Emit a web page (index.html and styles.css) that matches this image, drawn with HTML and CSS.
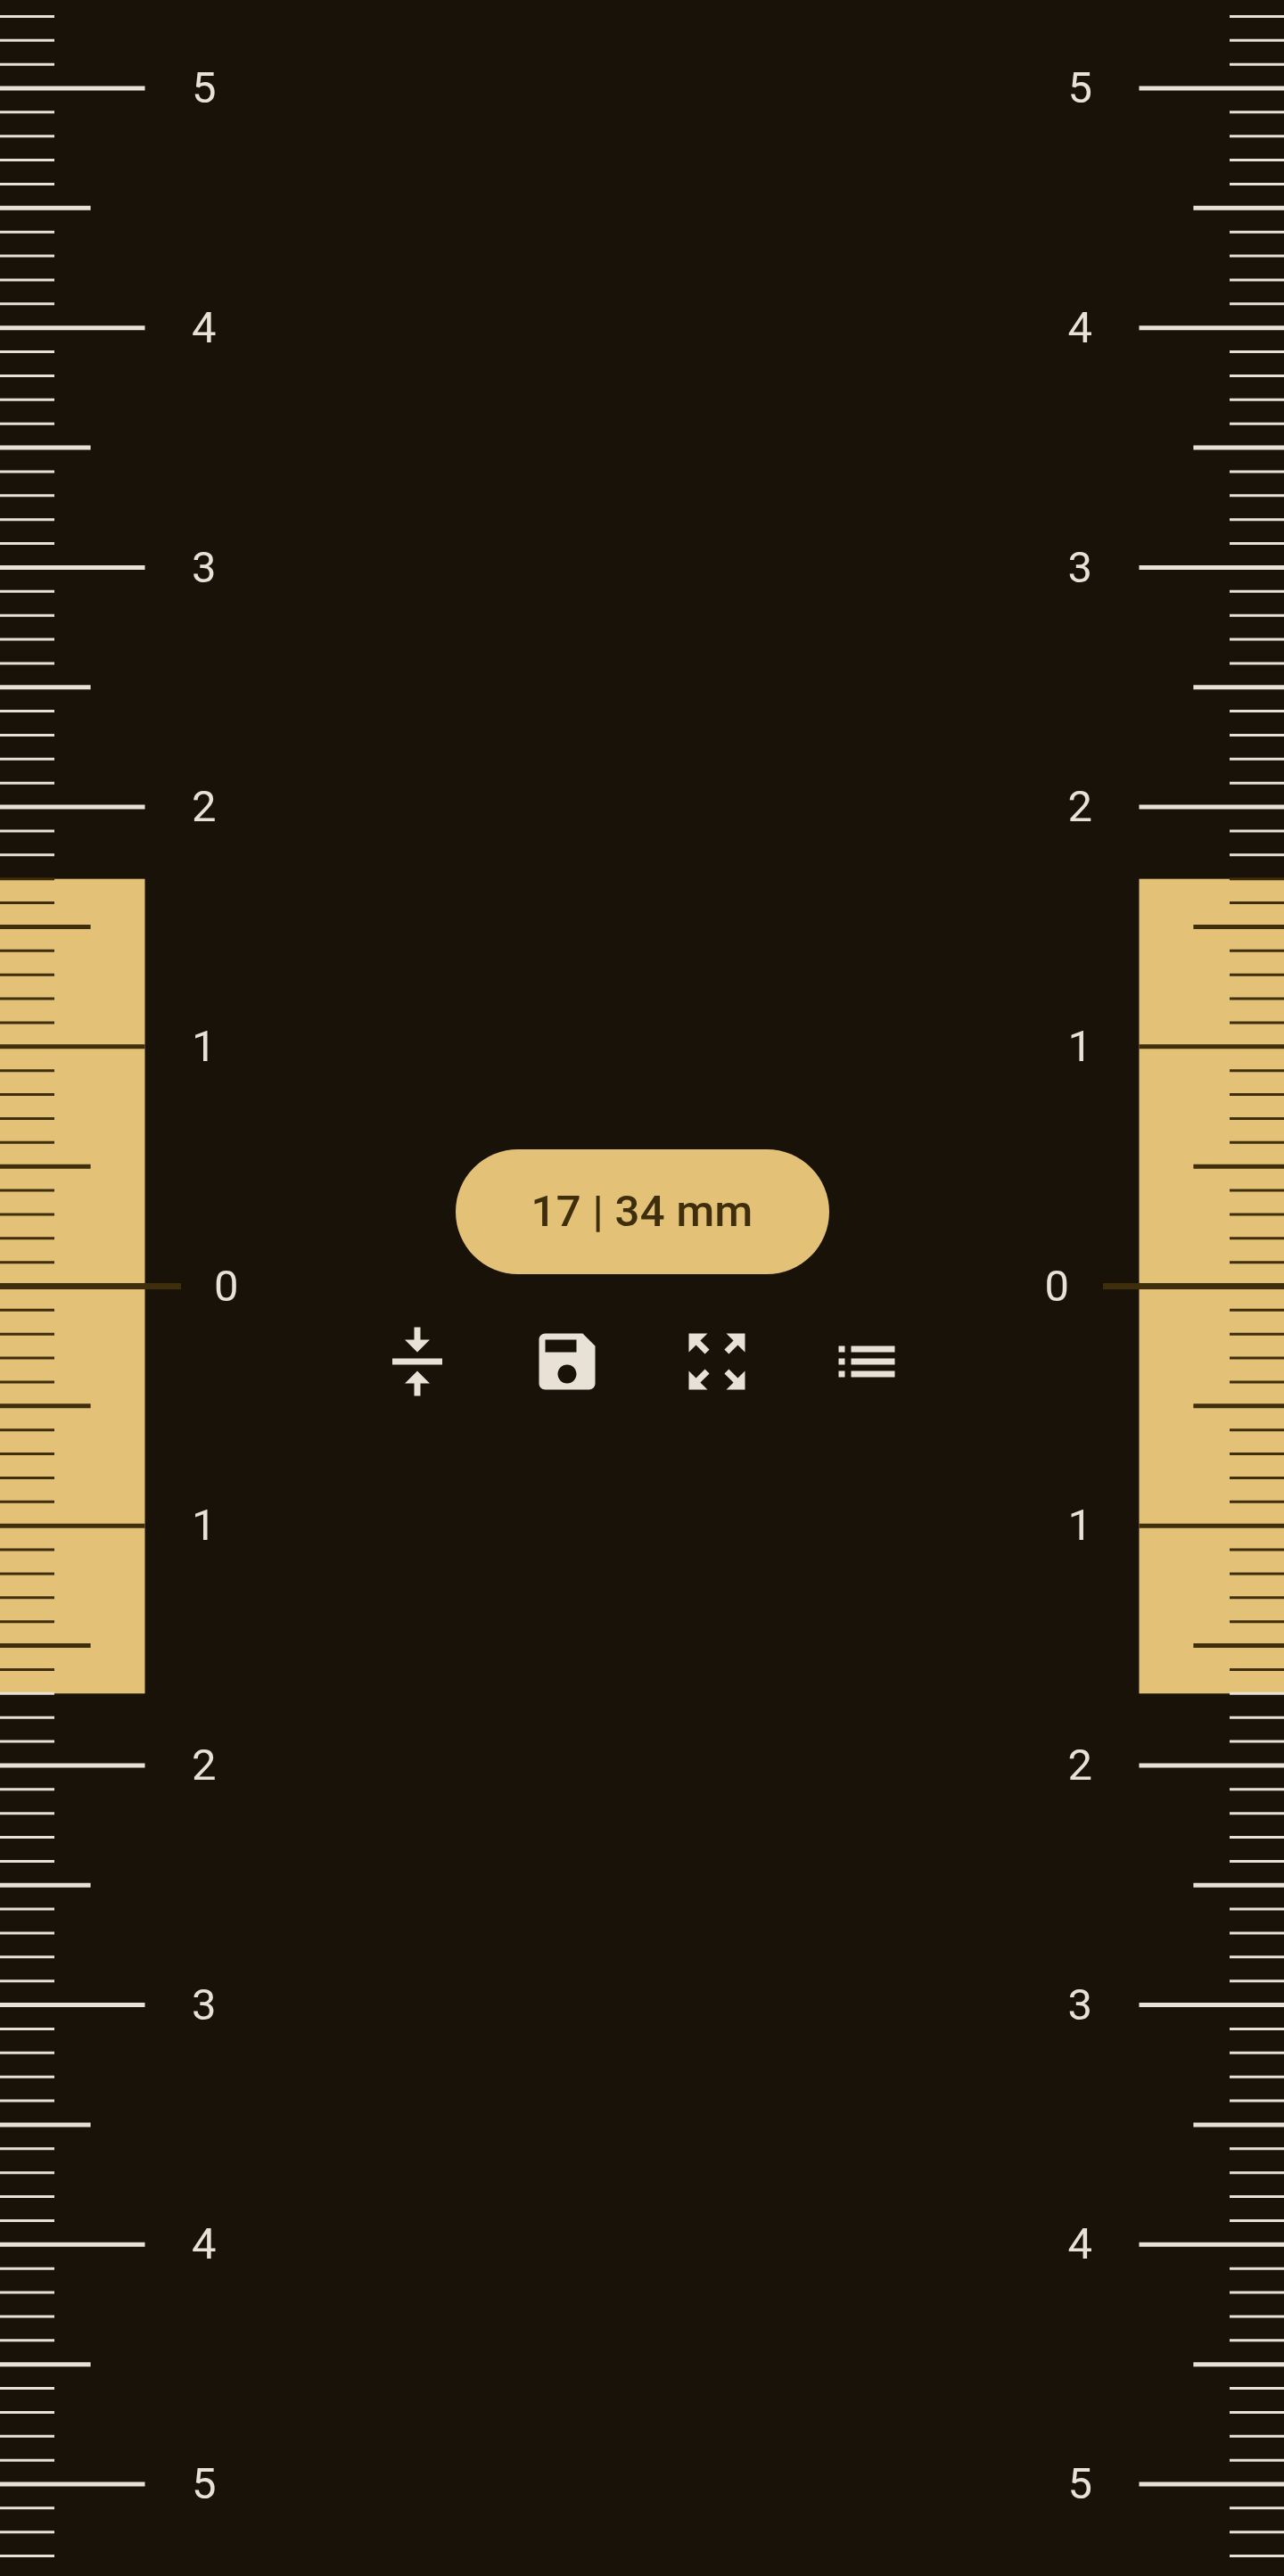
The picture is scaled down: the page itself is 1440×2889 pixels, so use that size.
FILE: index.html
```html
<!DOCTYPE html>
<html lang="en">
<head>
<meta charset="utf-8">
<title>Ruler</title>
<link rel="stylesheet" href="styles.css">
</head>
<body>
<!-- Scale marks: 26.87px per millimetre, zero at y = 1442.5 -->
<main class="screen">
  <svg class="ruler" viewBox="0 0 300 2889" role="img" aria-label="Left ruler">
    <defs>
      <g id="marks" transform="translate(0 1442.5)">
        <rect class="range" x="0" y="-456.8" width="162.5" height="913.6"/>
        <g class="light">
          <path class="minor" d="M30.5 -1425.61V-482M30.5 455.29V1430"/>
          <path class="half" d="M50.8 -1211.65V-600M50.8 669.25V1300"/>
          <path class="major" d="M81.25 -1346V-500M81.25 534.9V1400"/>
        </g>
        <g class="dark">
          <path class="minor" d="M30.5 -458.29V440"/>
          <path class="half" d="M50.8 -405.55V420"/>
          <path class="major" d="M81.25 -271.2V290"/>
          <path class="zero" d="M0 0H203"/>
        </g>
      </g>
    </defs>
    <use href="#marks"/>
    <g class="labels">
      <text x="215" y="115">5</text>
      <text x="215" y="384">4</text>
      <text x="215" y="653">3</text>
      <text x="215" y="921">2</text>
      <text x="215" y="1190">1</text>
      <text x="240" y="1459">0</text>
      <text x="215" y="1727">1</text>
      <text x="215" y="1996">2</text>
      <text x="215" y="2265">3</text>
      <text x="215" y="2533">4</text>
      <text x="215" y="2802">5</text>
    </g>
  </svg>

  <section class="controls">
    <button class="reading">17 | 34 mm</button>
    <nav class="actions">
      <svg class="icon" viewBox="0 0 24 24"><path d="M8 19h3v4h2v-4h3l-4-4-4 4zm8-14h-3V1h-2v4H8l4 4 4-4zM4 11v2h16v-2H4z"/></svg>
      <svg class="icon" viewBox="0 0 24 24"><path d="M17 3H5c-1.11 0-2 .9-2 2v14c0 1.1.89 2 2 2h14c1.1 0 2-.9 2-2V7l-4-4zm-5 16c-1.66 0-3-1.34-3-3s1.34-3 3-3 3 1.34 3 3-1.34 3-3 3zm3-10H5V5h10v4z"/></svg>
      <svg class="icon" viewBox="0 0 24 24"><path d="M15 3l2.3 2.3-2.89 2.87 1.42 1.42L18.7 6.7 21 9V3zM3 9l2.3-2.3 2.87 2.89 1.42-1.42L6.7 5.3 9 3H3zm6 12l-2.3-2.3 2.89-2.87-1.42-1.42L5.3 17.3 3 15v6zm12-6l-2.3 2.3-2.87-2.89-1.42 1.42 2.89 2.87L15 21h6z"/></svg>
      <svg class="icon" viewBox="0 0 24 24"><path d="M3 13h2v-2H3v2zm0 4h2v-2H3v2zm0-8h2V7H3v2zm4 4h14v-2H7v2zm0 4h14v-2H7v2zM7 7v2h14V7H7z"/></svg>
    </nav>
  </section>

  <svg class="ruler" viewBox="0 0 300 2889" role="img" aria-label="Right ruler">
    <use href="#marks" transform="translate(300 0) scale(-1 1)"/>
    <g class="labels">
      <text x="57.5" y="115">5</text>
      <text x="57.5" y="384">4</text>
      <text x="57.5" y="653">3</text>
      <text x="57.5" y="921">2</text>
      <text x="57.5" y="1190">1</text>
      <text x="31.5" y="1459">0</text>
      <text x="57.5" y="1727">1</text>
      <text x="57.5" y="1996">2</text>
      <text x="57.5" y="2265">3</text>
      <text x="57.5" y="2533">4</text>
      <text x="57.5" y="2802">5</text>
    </g>
  </svg>
</main>
</body>
</html>
```
FILE: styles.css
```css
:root {
  --surface: #191209;
  --on-surface: #eae1d6;
  --primary: #e3c278;
  --on-primary: #3e2e0b;
}

body {
  margin: 0;
  background: var(--surface);
  font-family: Roboto, "Liberation Sans", sans-serif;
}

.screen {
  display: grid;
  grid-template-columns: 300px 1fr 300px;
  height: 2889px;
  overflow: hidden;
}

.ruler {
  display: block;
  width: 300px;
  height: 2889px;
}

.range { fill: var(--primary); }
.light { stroke: var(--on-surface); }
.dark { stroke: var(--on-primary); }

.minor {
  stroke-width: 61px;
  stroke-dasharray: 3 23.87;
}

.half {
  stroke-width: 101.6px;
  stroke-dasharray: 5 263.7;
}

.major {
  stroke-width: 162.5px;
  stroke-dasharray: 5 263.7;
}

.zero { stroke-width: 7px; }

.labels {
  fill: var(--on-surface);
  font-size: 49px;
}

.controls {
  display: flex;
  flex-direction: column;
  align-items: center;
  gap: 56px;
  padding-top: 1289px;
}

.reading {
  width: 419px;
  height: 140px;
  padding: 0;
  border: 0;
  border-radius: 70px;
  background: var(--primary);
  color: var(--on-primary);
  font: 500 49px/140px Roboto, "Liberation Sans", sans-serif;
  letter-spacing: 0.35px;
}

.actions {
  display: flex;
  gap: 84px;
}

.icon {
  width: 84px;
  height: 84px;
  fill: var(--on-surface);
}
```
